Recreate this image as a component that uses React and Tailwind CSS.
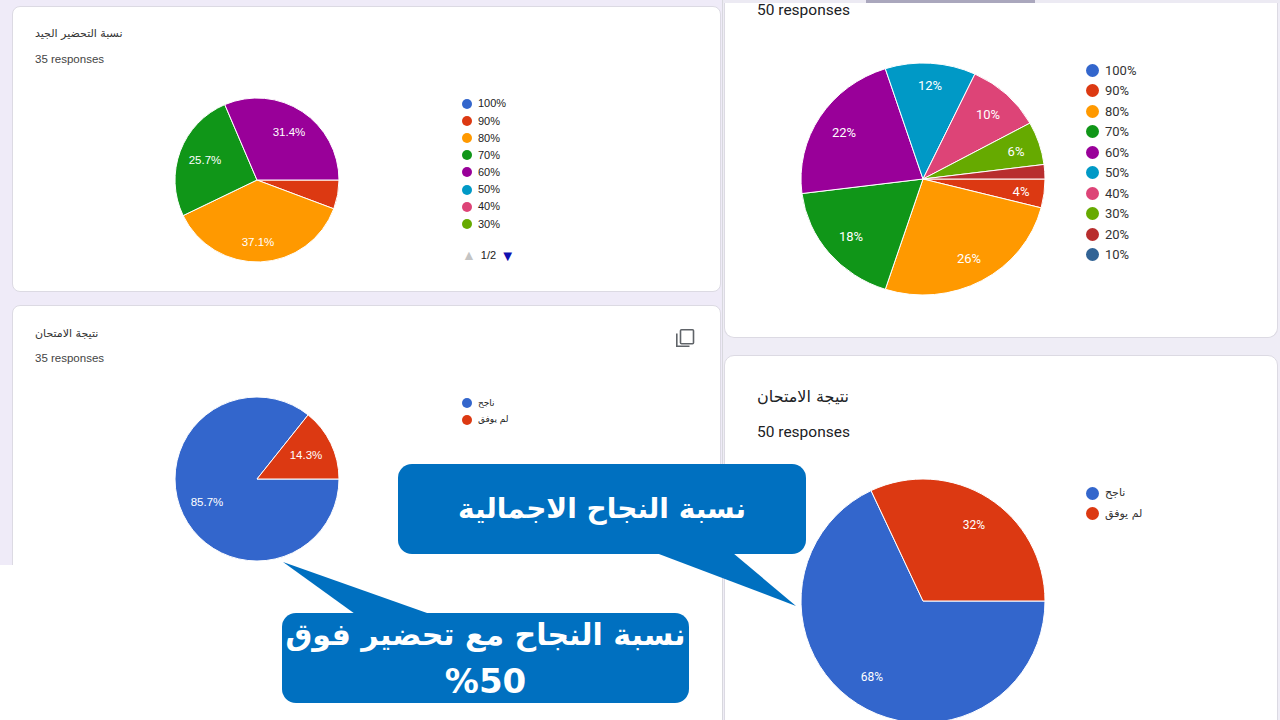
import React from "react";

const pal = {
  blue: "#3366cc",
  red: "#dc3912",
  orange: "#ff9900",
  green: "#109618",
  purple: "#990099",
  cyan: "#0099c6",
  pink: "#dd4477",
  lime: "#66aa00",
  brick: "#b82e2e",
  navy: "#316395",
};

const arabic = { fontFamily: '"DejaVu Sans", sans-serif' };

function Pie({ w, h, cx, cy, rx, ry, slices, labels, size, font }) {
  const total = slices.reduce((s, x) => s + x.v, 0);
  let acc = 0;
  return (
    <svg width={w} height={h} className="shrink-0">
      {slices.map((s, i) => {
        const a0 = (acc / total) * Math.PI * 2;
        acc += s.v;
        const a1 = (acc / total) * Math.PI * 2;
        if (!s.v) return null;
        const x0 = cx + rx * Math.cos(a0);
        const y0 = cy + ry * Math.sin(a0);
        const x1 = cx + rx * Math.cos(a1);
        const y1 = cy + ry * Math.sin(a1);
        const large = a1 - a0 > Math.PI ? 1 : 0;
        return (
          <path
            key={i}
            d={`M${cx} ${cy}L${x0} ${y0}A${rx} ${ry} 0 ${large} 1 ${x1} ${y1}Z`}
            fill={s.c}
            stroke="#fff"
            strokeWidth="1"
            strokeLinejoin="round"
          />
        );
      })}
      {labels.map((l, i) => (
        <text
          key={i}
          x={l.x}
          y={l.y}
          fill="#fff"
          fontSize={size}
          fontFamily={font}
          textAnchor="middle"
          dominantBaseline="central"
        >
          {l.t}
        </text>
      ))}
    </svg>
  );
}

function CopyIcon() {
  return (
    <svg width="20" height="20" viewBox="0 0 20 20" fill="none" stroke="#5f6368" strokeWidth="1.6">
      <rect x="5.5" y="1.8" width="13" height="14" rx="1" />
      <path d="M1.8 5.5V18.2H14.5" />
    </svg>
  );
}

const smallLegend = [
  ["100%", pal.blue],
  ["90%", pal.red],
  ["80%", pal.orange],
  ["70%", pal.green],
  ["60%", pal.purple],
  ["50%", pal.cyan],
  ["40%", pal.pink],
  ["30%", pal.lime],
];

const bigLegend = [
  ["100%", pal.blue],
  ["90%", pal.red],
  ["80%", pal.orange],
  ["70%", pal.green],
  ["60%", pal.purple],
  ["50%", pal.cyan],
  ["40%", pal.pink],
  ["30%", pal.lime],
  ["20%", pal.brick],
  ["10%", pal.navy],
];

export default function App() {
  return (
    <div className="relative w-[1280px] h-[720px] overflow-hidden bg-white flex">
      {/* left screenshot */}
      <div
        className="w-[722px] h-[565px] shrink-0 bg-[#efebf8] overflow-hidden pt-[6px] pl-[12px] pr-[1px] flex flex-col gap-[13px]"
        style={{ fontFamily: '"Liberation Sans", Arial, sans-serif' }}
      >
        <div className="h-[286px] shrink-0 bg-white border border-[#dcdae3] rounded-[8px]">
          <div className="pt-[18px] pl-[22px]">
            <div className="h-[16px] leading-[16px] text-[11px] text-[#333]">
              <span dir="rtl" style={arabic}>نسبة التحضير الجيد</span>
            </div>
            <div className="mt-[10px] h-[16px] leading-[16px] text-[11.5px] text-[#444]">35 responses</div>
          </div>
          <div className="mt-[18px] flex items-start">
            <div className="ml-[144px]">
              <Pie
                w={200}
                h={190}
                cx={100}
                cy={95}
                rx={82}
                ry={82}
                size={11.5}
                font='"Liberation Sans", Arial, sans-serif'
                slices={[
                  { v: 0, c: pal.blue },
                  { v: 2, c: pal.red },
                  { v: 13, c: pal.orange },
                  { v: 9, c: pal.green },
                  { v: 11, c: pal.purple },
                ]}
                labels={[
                  { x: 132, y: 47, t: "31.4%" },
                  { x: 48, y: 75, t: "25.7%" },
                  { x: 101, y: 157, t: "37.1%" },
                ]}
              />
            </div>
            <div className="ml-[105px] mt-[10px] flex flex-col">
              {smallLegend.map(([t, c]) => (
                <div key={t} className="h-[17.2px] flex items-center">
                  <span className="w-[10px] h-[10px] rounded-full shrink-0" style={{ background: c }} />
                  <span className="ml-[6px] text-[11px] text-[#222]">{t}</span>
                </div>
              ))}
              <div className="mt-[14px] h-[17px] flex items-center text-[11px] text-[#222]">
                <span className="text-[#c4c4c4] text-[14px] leading-none">▲</span>
                <span className="ml-[5px]">1/2</span>
                <span className="ml-[4px] text-[#1010b0] text-[15px] leading-none">▼</span>
              </div>
            </div>
          </div>
        </div>

        <div className="h-[300px] shrink-0 bg-white border border-[#dcdae3] rounded-[8px]">
          <div className="pt-[19px] pl-[22px] pr-[25px] flex justify-between items-start">
            <div>
              <div className="h-[16px] leading-[16px] text-[11px] text-[#333]">
                <span dir="rtl" style={arabic}>نتيجة الامتحان</span>
              </div>
              <div className="mt-[9px] h-[16px] leading-[16px] text-[11.5px] text-[#444]">35 responses</div>
            </div>
            <div className="mt-[3px]">
              <CopyIcon />
            </div>
          </div>
          <div className="mt-[19px] flex items-start">
            <div className="ml-[144px]">
              <Pie
                w={200}
                h={190}
                cx={100}
                cy={94}
                rx={82}
                ry={82}
                size={11.5}
                font='"Liberation Sans", Arial, sans-serif'
                slices={[
                  { v: 30, c: pal.blue },
                  { v: 5, c: pal.red },
                ]}
                labels={[
                  { x: 149, y: 70, t: "14.3%" },
                  { x: 50, y: 117, t: "85.7%" },
                ]}
              />
            </div>
            <div className="ml-[105px] mt-[10px] flex flex-col">
              {[
                ["ناجح", pal.blue],
                ["لم يوفق", pal.red],
              ].map(([t, c]) => (
                <div key={t} className="h-[16.5px] flex items-center">
                  <span className="w-[10px] h-[10px] rounded-full shrink-0" style={{ background: c }} />
                  <span className="ml-[6px] text-[9px] text-[#222]" dir="rtl" style={arabic}>
                    {t}
                  </span>
                </div>
              ))}
            </div>
          </div>
        </div>
      </div>

      {/* right screenshot */}
      <div
        className="relative flex-1 h-full bg-[#efedf6] border-l border-[#d8d8de] pl-[1px] pr-[2px] flex flex-col gap-[17px]"
        style={{ fontFamily: "Roboto, sans-serif" }}
      >
        <div className="h-[338px] shrink-0 bg-white border border-t-0 border-[#dcdae3] rounded-b-[10px]">
          <div className="pl-[32px] h-[20px] leading-[20px] text-[15.5px] text-[#202124]">50 responses</div>
          <div className="mt-[33px] flex items-start">
            <div className="ml-[66px]">
              <Pie
                w={270}
                h={250}
                cx={132}
                cy={126}
                rx={122}
                ry={116}
                size={13}
                font="Roboto, sans-serif"
                slices={[
                  { v: 0, c: pal.blue },
                  { v: 4, c: pal.red },
                  { v: 26, c: pal.orange },
                  { v: 18, c: pal.green },
                  { v: 22, c: pal.purple },
                  { v: 12, c: pal.cyan },
                  { v: 10, c: pal.pink },
                  { v: 6, c: pal.lime },
                  { v: 2, c: pal.brick },
                  { v: 0, c: pal.navy },
                ]}
                labels={[
                  { x: 139, y: 32, t: "12%" },
                  { x: 197, y: 61, t: "10%" },
                  { x: 53, y: 79, t: "22%" },
                  { x: 225, y: 98, t: "6%" },
                  { x: 230, y: 138, t: "4%" },
                  { x: 60, y: 183, t: "18%" },
                  { x: 178, y: 205, t: "26%" },
                ]}
              />
            </div>
            <div className="ml-[25px] mt-[7px] flex flex-col">
              {bigLegend.map(([t, c]) => (
                <div key={t} className="h-[20.5px] flex items-center">
                  <span className="w-[13px] h-[13px] rounded-full shrink-0" style={{ background: c }} />
                  <span className="ml-[6px] text-[13px] text-[#333]">{t}</span>
                </div>
              ))}
            </div>
          </div>
        </div>

        <div className="h-[380px] shrink-0 bg-white border border-[#dcdae3] rounded-[10px]">
          <div className="pt-[29px] pl-[32px]">
            <div className="h-[24px] leading-[24px] text-[16px] text-[#202124]">
              <span dir="rtl" style={arabic}>نتيجة الامتحان</span>
            </div>
            <div className="mt-[13px] h-[20px] leading-[20px] text-[15.5px] text-[#202124]">50 responses</div>
          </div>
          <div className="mt-[28px] flex items-start">
            <div className="ml-[66px]">
              <Pie
                w={270}
                h={260}
                cx={132}
                cy={131}
                rx={122}
                ry={122}
                size={12}
                font="Roboto, sans-serif"
                slices={[
                  { v: 34, c: pal.blue },
                  { v: 16, c: pal.red },
                ]}
                labels={[
                  { x: 183, y: 55, t: "32%" },
                  { x: 81, y: 207, t: "68%" },
                ]}
              />
            </div>
            <div className="ml-[25px] mt-[13px] flex flex-col">
              {[
                ["ناجح", pal.blue],
                ["لم يوفق", pal.red],
              ].map(([t, c]) => (
                <div key={t} className="h-[20.5px] flex items-center">
                  <span className="w-[13px] h-[13px] rounded-full shrink-0" style={{ background: c }} />
                  <span className="ml-[6px] text-[11px] text-[#333]" dir="rtl" style={arabic}>
                    {t}
                  </span>
                </div>
              ))}
            </div>
          </div>
        </div>

        <div className="absolute top-0 left-0 right-0 h-[3px] bg-[#eceaf3] flex">
          <div className="ml-[143px] w-[169px] h-full bg-[#aaa7bd]" />
        </div>
      </div>

      {/* callout tails */}
      <svg className="absolute inset-0 pointer-events-none" width="1280" height="720">
        <polygon points="643,548 727,548 796,606" fill="#0070c0" />
        <polygon points="283,562 362,619 444,619" fill="#0070c0" />
      </svg>

      {/* callouts */}
      <div
        className="absolute left-[398px] top-[464px] w-[408px] h-[90px] rounded-[14px] bg-[#0070c0] flex items-center justify-center text-white font-bold text-[28px]"
        dir="rtl"
        style={arabic}
      >
        نسبة النجاح الاجمالية
      </div>
      <div
        className="absolute left-[282px] top-[613px] w-[407px] h-[90px] rounded-[14px] bg-[#0070c0] flex flex-col items-center justify-center text-white font-bold text-[30px] leading-[46px]"
        dir="rtl"
        style={arabic}
      >
        <div>نسبة النجاح مع تحضير فوق</div>
        <div dir="ltr" className="text-[34px] leading-[46px]">%50</div>
      </div>
    </div>
  );
}
